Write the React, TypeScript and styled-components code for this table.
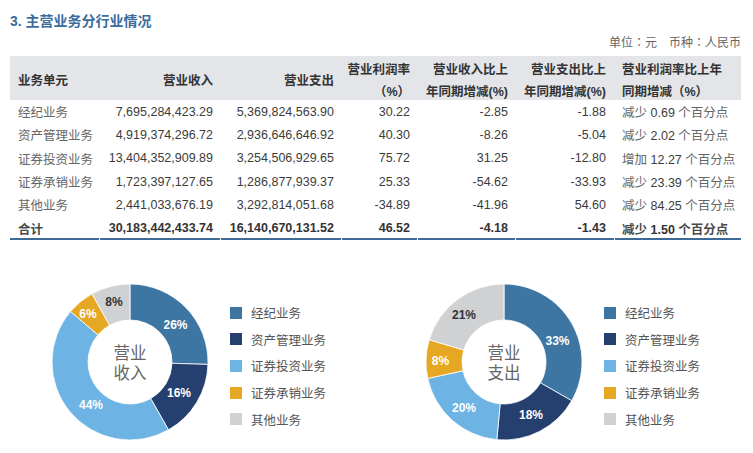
import React from 'react';
import styled, { createGlobalStyle } from 'styled-components';

const GlobalStyle = createGlobalStyle`
  html, body { margin: 0; padding: 0; background: #fff; }
  body { font-family: "Liberation Sans", "Noto Sans CJK SC", sans-serif; }
`;

const FONT = '"Liberation Sans", "Noto Sans CJK SC", sans-serif';

const Page = styled.div`
  width: 753px;
  height: 453px;
  overflow: hidden;
  box-sizing: border-box;
  padding: 11px 12px 0 10px;
  font-family: ${FONT};
`;

const Title = styled.h1`
  margin: 0;
  font-size: 14px;
  line-height: 20px;
  font-weight: bold;
  color: #3b6c9c;
`;

const Unit = styled.div`
  width: 731px;
  margin: 2px 0 3px;
  text-align: right;
  font-family: "Liberation Sans", "Noto Sans CJK TC", sans-serif;
  font-size: 12px;
  line-height: 20px;
  color: #666;
`;

const COLS = '89px 120px 120px 75px 97px 98px 126px';

const HeadRow = styled.div`
  display: grid;
  grid-template-columns: ${COLS};
  column-gap: 1px;
  width: 731px;
  height: 44px;
  box-sizing: border-box;
  padding-top: 3px;
  background: #e3e5e8;
  align-items: center;
  font-size: 12.5px;
  font-weight: bold;
  color: #333;
  line-height: 22px;
`;

const BodyRow = styled.div<{ $total?: boolean }>`
  display: grid;
  grid-template-columns: ${COLS};
  column-gap: 1px;
  width: 731px;
  height: 23.33px;
  font-size: 12.5px;
  font-weight: ${(p) => (p.$total ? 'bold' : 'normal')};
  color: ${(p) => (p.$total ? '#333' : '#3c3c3c')};
`;

const Cell = styled.div<{ $align?: 'left' | 'right'; $total?: boolean; $pl?: number; $pr?: number }>`
  display: flex;
  flex-direction: column;
  justify-content: center;
  align-items: ${(p) => (p.$align === 'right' ? 'flex-end' : 'flex-start')};
  box-sizing: border-box;
  padding-left: ${(p) => p.$pl ?? 7}px;
  padding-right: ${(p) => p.$pr ?? 7}px;
  padding-top: ${(p) => (p.$total ? 2 : 0)}px;
  white-space: nowrap;
  border-bottom: ${(p) => (p.$total ? '2px solid #3d6b96' : 'none')};
`;

const Cjk = styled.span<{ $total?: boolean }>`
  color: ${(p) => (p.$total ? '#4a4a4a' : '#666')};
`;

const Charts = styled.div`
  display: grid;
  grid-template-columns: 374px 374px;
  margin-top: 42.5px;
  padding-left: 39.5px;
`;

const ChartBlock = styled.div`
  display: flex;
  align-items: flex-start;
  gap: 20.5px;
`;

const Legend = styled.ul`
  list-style: none;
  margin: 0;
  padding: 17px 0 0;
`;

const LegendItem = styled.li`
  display: flex;
  align-items: center;
  gap: 9px;
  height: 26.6px;
  font-size: 12.5px;
  color: #555;
`;

const Swatch = styled.span<{ $c: string }>`
  width: 12px;
  height: 12px;
  background: ${(p) => p.$c};
`;

const COLORS = ['#3d75a3', '#253f6f', '#6db3e3', '#e6a822', '#d0d1d3'];
const NAMES = ['经纪业务', '资产管理业务', '证券投资业务', '证券承销业务', '其他业务'];

type Row = { name: string; nums: string[]; verb: string; pts: string };
const rows: Row[] = [
  { name: '经纪业务', nums: ['7,695,284,423.29', '5,369,824,563.90', '30.22', '-2.85', '-1.88'], verb: '减少', pts: '0.69' },
  { name: '资产管理业务', nums: ['4,919,374,296.72', '2,936,646,646.92', '40.30', '-8.26', '-5.04'], verb: '减少', pts: '2.02' },
  { name: '证券投资业务', nums: ['13,404,352,909.89', '3,254,506,929.65', '75.72', '31.25', '-12.80'], verb: '增加', pts: '12.27' },
  { name: '证券承销业务', nums: ['1,723,397,127.65', '1,286,877,939.37', '25.33', '-54.62', '-33.93'], verb: '减少', pts: '23.39' },
  { name: '其他业务', nums: ['2,441,033,676.19', '3,292,814,051.68', '-34.89', '-41.96', '54.60'], verb: '减少', pts: '84.25' },
];
const total: Row = { name: '合计', nums: ['30,183,442,433.74', '16,140,670,131.52', '46.52', '-4.18', '-1.43'], verb: '减少', pts: '1.50' };

const NUM_PR = [7, 7, 7, 7, 8];

function arc(cx: number, cy: number, r0: number, r1: number, f0: number, f1: number) {
  const a0 = f0 * Math.PI * 2;
  const a1 = f1 * Math.PI * 2;
  const p = (r: number, a: number) => [cx + r * Math.sin(a), cy - r * Math.cos(a)];
  const [x0, y0] = p(r1, a0);
  const [x1, y1] = p(r1, a1);
  const [x2, y2] = p(r0, a1);
  const [x3, y3] = p(r0, a0);
  const large = f1 - f0 > 0.5 ? 1 : 0;
  return `M${x0} ${y0} A${r1} ${r1} 0 ${large} 1 ${x1} ${y1} L${x2} ${y2} A${r0} ${r0} 0 ${large} 0 ${x3} ${y3} Z`;
}

type Label = { t: string; x: number; y: number; dark?: boolean };

function Donut({ values, labels, center }: { values: number[]; labels: Label[]; center: [string, string] }) {
  const sum = values.reduce((a, b) => a + b, 0);
  let acc = 0;
  const slices = values.map((v, i) => {
    const f0 = acc / sum;
    acc += v;
    const f1 = acc / sum;
    return <path key={i} d={arc(80, 80, 42, 78, f0, f1)} fill={COLORS[i]} stroke="#fff" strokeWidth={0.8} />;
  });
  return (
    <svg width={160} height={160} viewBox="0 0 160 160">
      {slices}
      {labels.map((l) => (
        <text
          key={l.t + l.x}
          x={l.x}
          y={l.y}
          textAnchor="middle"
          dominantBaseline="central"
          fontFamily={FONT}
          fontSize={12}
          fontWeight="bold"
          fill={l.dark ? '#333' : '#fff'}
        >
          {l.t}
        </text>
      ))}
      <text x={80} y={70.5} textAnchor="middle" dominantBaseline="central" fontFamily={FONT} fontSize={16.5} fill="#666">
        {center[0]}
      </text>
      <text x={80} y={91} textAnchor="middle" dominantBaseline="central" fontFamily={FONT} fontSize={16.5} fill="#666">
        {center[1]}
      </text>
    </svg>
  );
}

function ChartLegend() {
  return (
    <Legend>
      {NAMES.map((n, i) => (
        <LegendItem key={n}>
          <Swatch $c={COLORS[i]} />
          {n}
        </LegendItem>
      ))}
    </Legend>
  );
}

const incomeLabels: Label[] = [
  { t: '26%', x: 125.5, y: 42.5 },
  { t: '16%', x: 129, y: 111 },
  { t: '44%', x: 41, y: 123 },
  { t: '6%', x: 38, y: 31.5 },
  { t: '8%', x: 64, y: 19.5, dark: true },
];

const expenseLabels: Label[] = [
  { t: '33%', x: 133.5, y: 58.5 },
  { t: '18%', x: 107, y: 133 },
  { t: '20%', x: 40, y: 125.5 },
  { t: '8%', x: 16.5, y: 79 },
  { t: '21%', x: 40, y: 33, dark: true },
];

function DataRow({ r, isTotal }: { r: Row; isTotal?: boolean }) {
  return (
    <BodyRow $total={isTotal}>
      <Cell $total={isTotal} $pl={8}>
        <Cjk $total={isTotal}>{r.name}</Cjk>
      </Cell>
      {r.nums.map((n, i) => (
        <Cell key={i} $total={isTotal} $align="right" $pr={NUM_PR[i]}>
          {n}
        </Cell>
      ))}
      <Cell $total={isTotal}>
        <span>
          <Cjk $total={isTotal}>{r.verb}</Cjk> {r.pts} <Cjk $total={isTotal}>个百分点</Cjk>
        </span>
      </Cell>
    </BodyRow>
  );
}

export default function App() {
  return (
    <>
      <GlobalStyle />
      <Page>
        <Title>3. 主营业务分行业情况</Title>
        <Unit>单位：元　币种：人民币</Unit>
        <HeadRow>
          <Cell $pl={8}>业务单元</Cell>
          <Cell $align="right">营业收入</Cell>
          <Cell $align="right">营业支出</Cell>
          <Cell $align="right">
            <span>营业利润率</span>
            <span>（%）</span>
          </Cell>
          <Cell $align="right">
            <span>营业收入比上</span>
            <span>年同期增减(%)</span>
          </Cell>
          <Cell $align="right" $pr={8}>
            <span>营业支出比上</span>
            <span>年同期增减(%)</span>
          </Cell>
          <Cell>
            <span>营业利润率比上年</span>
            <span>同期增减（%）</span>
          </Cell>
        </HeadRow>
        {rows.map((r) => (
          <DataRow key={r.name} r={r} />
        ))}
        <DataRow r={total} isTotal />
        <Charts>
          <ChartBlock>
            <Donut
              values={[7695284423.29, 4919374296.72, 13404352909.89, 1723397127.65, 2441033676.19]}
              labels={incomeLabels}
              center={['营业', '收入']}
            />
            <ChartLegend />
          </ChartBlock>
          <ChartBlock>
            <Donut
              values={[5369824563.9, 2936646646.92, 3254506929.65, 1286877939.37, 3292814051.68]}
              labels={expenseLabels}
              center={['营业', '支出']}
            />
            <ChartLegend />
          </ChartBlock>
        </Charts>
      </Page>
    </>
  );
}
